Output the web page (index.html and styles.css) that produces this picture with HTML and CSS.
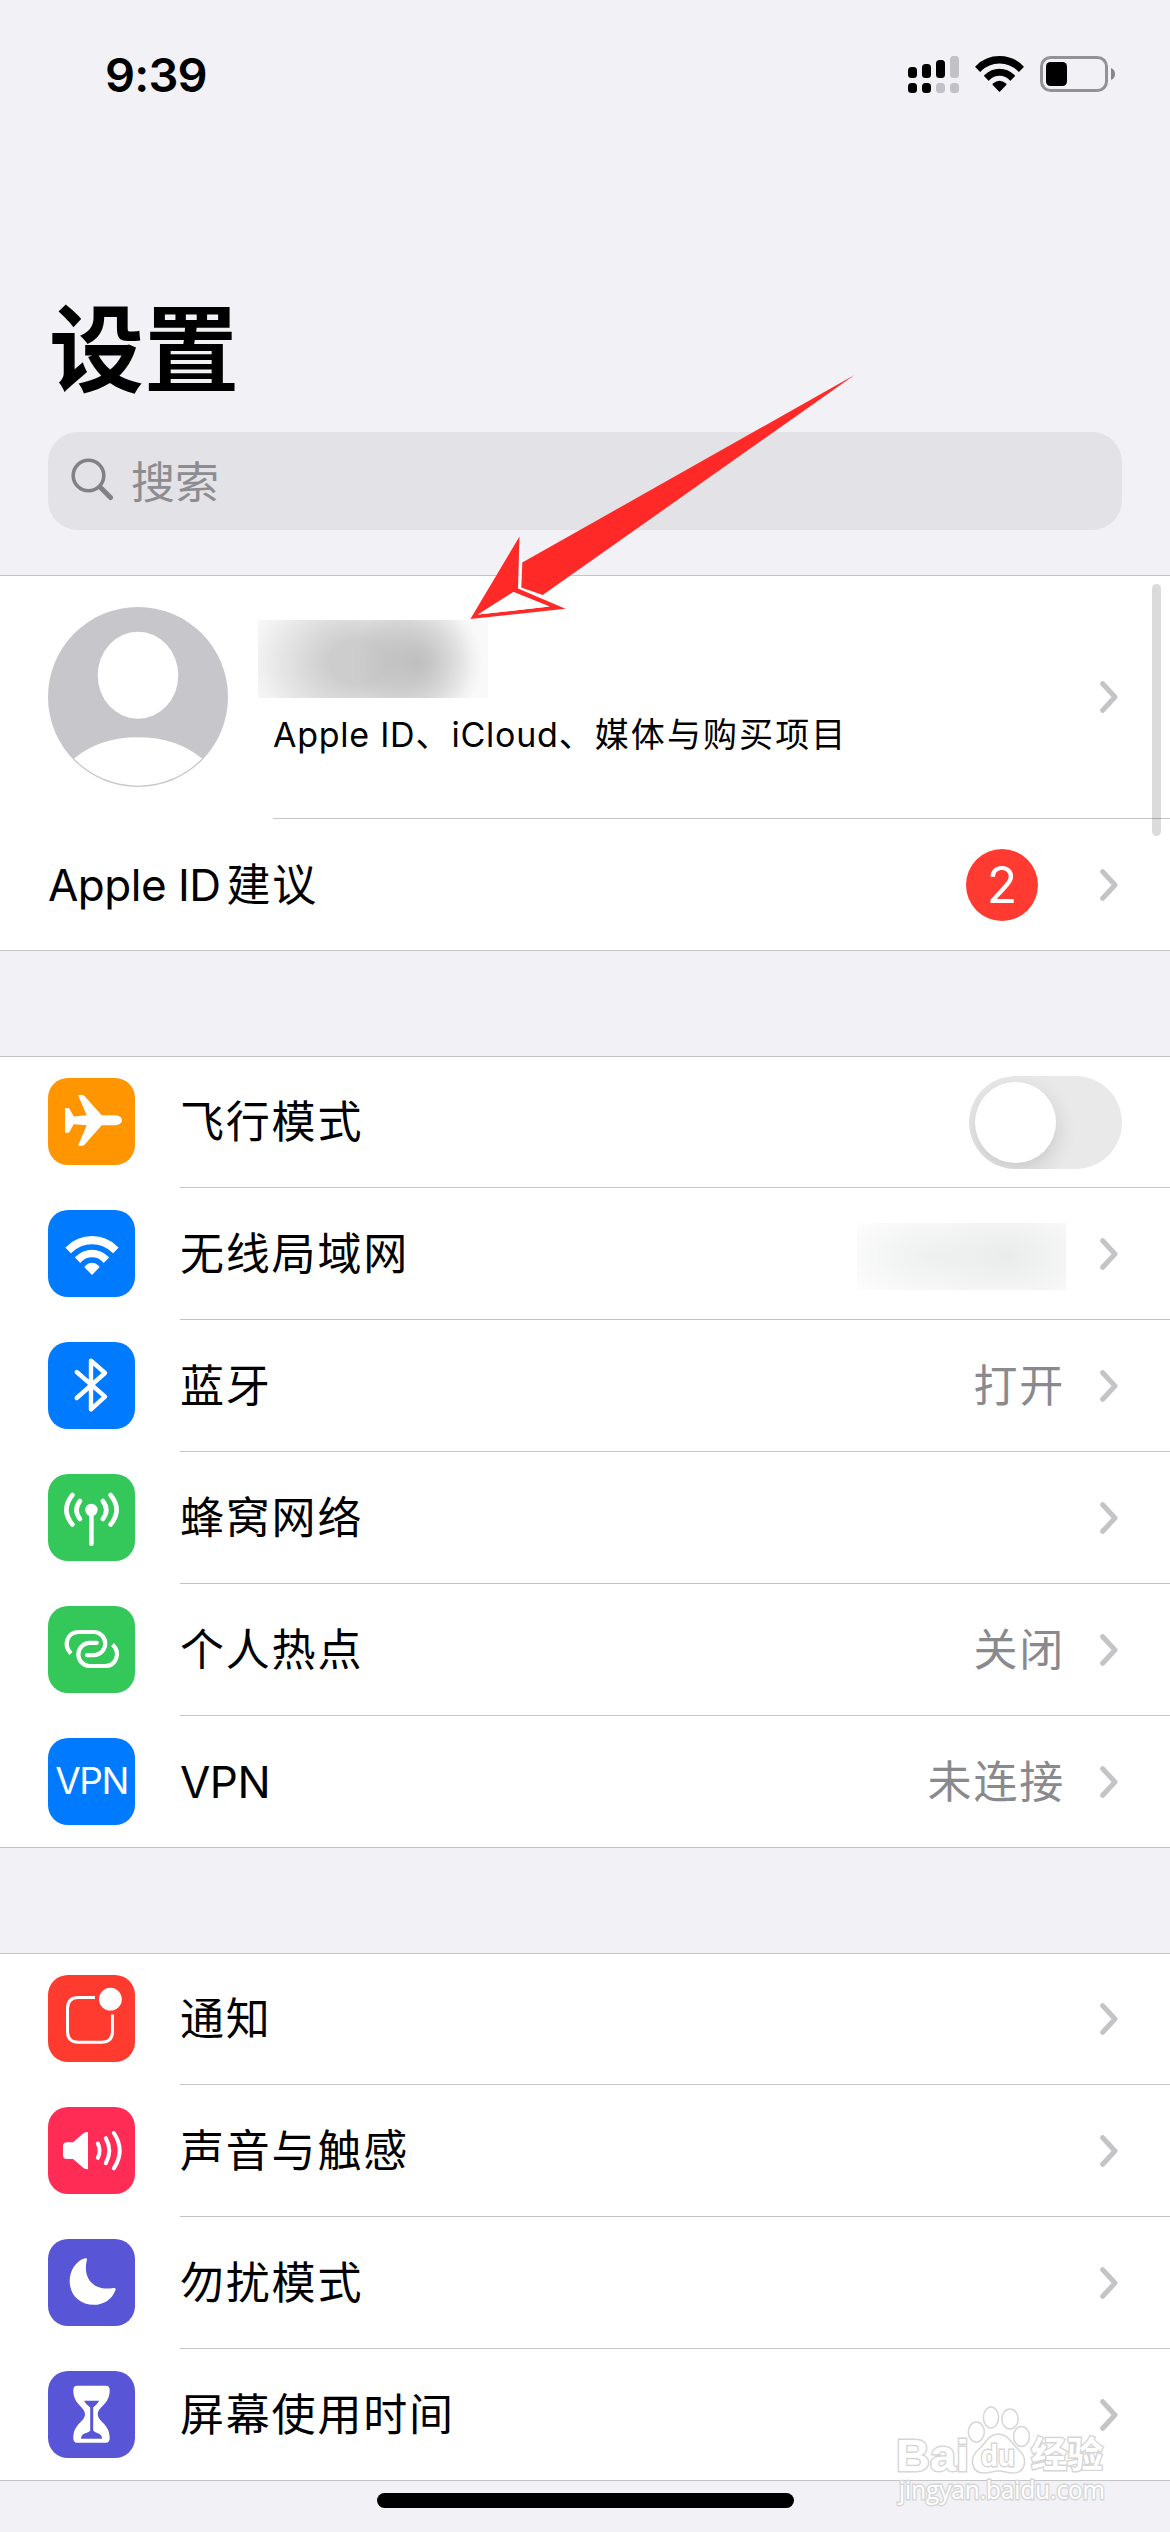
FILE: index.html
```html
<!DOCTYPE html>
<html lang="zh-CN">
<head>
  <meta charset="UTF-8" />
  <meta name="viewport" content="width=device-width, initial-scale=1.0"/>
  <title>设置</title>
  <link rel="stylesheet" href="styles.css">
</head>
<body>
<svg class="defs" width="0" height="0">
  <symbol id="chevron" viewBox="0 0 18 32">
    <path d="M2.7 2.7 L15 16 L2.7 29.3" fill="none" stroke="#c4c4c7" stroke-width="5" stroke-linecap="round" stroke-linejoin="round"/>
  </symbol>
  <clipPath id="wifi-clip"><path d="M24.5 36 L-13 -2.5 H62 Z"/></clipPath>
  <symbol id="wifi" viewBox="0 0 49 36">
    <g clip-path="url(#wifi-clip)" fill="none" stroke="currentColor">
      <circle cx="24.5" cy="33.5" r="29.7" stroke-width="7.4"/>
      <circle cx="24.5" cy="33.5" r="17.3" stroke-width="7"/>
      <circle cx="24.5" cy="33.5" r="8.7" fill="currentColor" stroke="none"/>
    </g>
  </symbol>
</svg>

<div class="phone">
  <header class="status-bar">
    <span class="time">9:39</span>
    <div class="status-icons">
      <svg width="51" height="37" viewBox="0 0 51 37">
        <rect x="0" y="11" width="9" height="11" rx="3.5"/>
        <rect x="14" y="8" width="9" height="14" rx="3.5"/>
        <rect x="28" y="4" width="9" height="18" rx="3.5"/>
        <rect x="42" y="0" width="9" height="22" rx="3.5" fill="#c1c1c6"/>
        <rect x="0" y="27" width="9" height="10" rx="3.5"/>
        <rect x="14" y="27" width="9" height="10" rx="3.5"/>
        <rect x="28" y="27" width="9" height="10" rx="3.5" fill="#c1c1c6"/>
        <rect x="42" y="27" width="9" height="10" rx="3.5" fill="#c1c1c6"/>
      </svg>
      <svg class="status-wifi" width="49" height="36"><use href="#wifi"/></svg>
      <svg width="76" height="36" viewBox="0 0 76 36">
        <rect x="1.5" y="1.5" width="65" height="33" rx="9" fill="none" stroke="#939397" stroke-width="3"/>
        <rect x="6" y="6" width="21" height="24" rx="4.5"/>
        <path d="M71 12 Q75 13.5 75 18 Q75 22.5 71 24 Z" fill="#87878b"/>
      </svg>
    </div>
  </header>

  <h1 class="title">设置</h1>

  <div class="search">
    <svg width="42" height="44" viewBox="0 0 42 44" fill="none" stroke="#828286" stroke-linecap="round">
      <circle cx="17.5" cy="17.5" r="15.3" stroke-width="3.6"/>
      <path d="M29 29 L39.5 39.5" stroke-width="5"/>
    </svg>
    <span>搜索</span>
  </div>

  <section class="group">
    <div class="profile">
      <svg class="avatar" width="180" height="180" viewBox="0 0 180 180">
        <circle cx="90" cy="90" r="90" fill="#c7c6cb"/>
        <ellipse cx="90" cy="68.3" rx="40.3" ry="43.5" fill="#fff"/>
        <path d="M26 151.5 Q52 130.3 90 130.3 Q128 130.3 154 151.5 A89 89 0 0 1 26 151.5 Z" fill="#fff"/>
      </svg>
      <div class="profile-text">
        <div class="hidden-name"></div>
        <div class="profile-sub"><span class="sub-latin">Apple ID</span>、<span class="sub-latin">iCloud</span>、媒体与购买项目</div>
      </div>
      <svg class="chevron" width="18" height="32"><use href="#chevron"/></svg>
    </div>
    <div class="row plain">
      <div class="row-body">
        <span class="label"><span class="latin">Apple ID</span>建议</span>
        <span class="badge">2</span>
        <svg class="chevron" width="18" height="32"><use href="#chevron"/></svg>
      </div>
    </div>
  </section>

  <section class="group">
    <div class="row">
      <div class="icon orange">
        <svg viewBox="0 0 87 87" fill="#fff"><path d="M67 37.3 H53.7 L36.5 18 Q35.5 17 34 17 H30 L38.7 37.3 L25.7 38.5 L21.6 31 Q21 30 20 30 H17 V54.7 H20 Q21 54.7 21.6 53.7 L25.7 46.3 L38.7 47.3 L30 67.7 H34 Q35.5 67.7 36.5 66.7 L53.7 47.3 H67 Q74 46.5 74 42.3 Q74 38 67 37.3 Z"/></svg>
      </div>
      <div class="row-body">
        <span class="label">飞行模式</span>
        <span class="toggle"><span class="knob"></span></span>
      </div>
    </div>
    <div class="row">
      <div class="icon blue">
        <svg class="icon-wifi"><use href="#wifi"/></svg>
      </div>
      <div class="row-body">
        <span class="label">无线局域网</span>
        <span class="hidden-network"></span>
        <svg class="chevron" width="18" height="32"><use href="#chevron"/></svg>
      </div>
    </div>
    <div class="row">
      <div class="icon blue">
        <svg viewBox="0 0 87 87" fill="none" stroke="#fff" stroke-width="4.4" stroke-linecap="round" stroke-linejoin="round"><path d="M28.7 30 L57 54.7 L43 67.3 V18.7 L57 31 L28.7 56"/></svg>
      </div>
      <div class="row-body">
        <span class="label">蓝牙</span>
        <span class="value">打开</span>
        <svg class="chevron" width="18" height="32"><use href="#chevron"/></svg>
      </div>
    </div>
    <div class="row">
      <div class="icon green">
        <svg viewBox="0 0 87 87" fill="none" stroke="#fff" stroke-width="4.6" stroke-linecap="round">
          <circle cx="43.4" cy="36" r="6.2" fill="#fff" stroke="none"/>
          <path d="M43.4 38 V69.8"/>
          <path d="M32 27 Q25 36 32 45 M54.8 27 Q61.8 36 54.8 45"/>
          <path d="M24.4 21 Q12.4 36 24.4 50.5 M62.6 21 Q74.6 36 62.6 50.5"/>
        </svg>
      </div>
      <div class="row-body">
        <span class="label">蜂窝网络</span>
        <svg class="chevron" width="18" height="32"><use href="#chevron"/></svg>
      </div>
    </div>
    <div class="row">
      <div class="icon green">
        <svg viewBox="0 0 87 87" fill="none" stroke="#fff" stroke-width="4.2">
          <path d="M23 47.5 C14.5 39 19.5 26 30.7 26 H46.7 A11.6 11.6 0 0 1 46.7 49.1 H39"/>
          <path d="M23 47.5 C14.5 39 19.5 26 30.7 26 H46.7 A11.6 11.6 0 0 1 46.7 49.1 H39" transform="rotate(180 43.8 43)"/>
          <path d="M39 49.1 H38.9 M48.6 36.9 H48.7" stroke-linecap="round"/>
        </svg>
      </div>
      <div class="row-body">
        <span class="label">个人热点</span>
        <span class="value">关闭</span>
        <svg class="chevron" width="18" height="32"><use href="#chevron"/></svg>
      </div>
    </div>
    <div class="row">
      <div class="icon blue vpn">VPN</div>
      <div class="row-body">
        <span class="label"><span class="latin">VPN</span></span>
        <span class="value">未连接</span>
        <svg class="chevron" width="18" height="32"><use href="#chevron"/></svg>
      </div>
    </div>
  </section>

  <section class="group">
    <div class="row">
      <div class="icon red">
        <svg viewBox="0 0 87 87" fill="none" stroke="#fff" stroke-width="3">
          <path d="M47 22.4 H30.5 Q19.5 22.4 19.5 33.4 V56.2 Q19.5 67.2 30.5 67.2 H53.5 Q64.5 67.2 64.5 56.2 V39.6"/>
          <circle cx="62.4" cy="24.2" r="11.4" fill="#fff" stroke="none"/>
        </svg>
      </div>
      <div class="row-body">
        <span class="label">通知</span>
        <svg class="chevron" width="18" height="32"><use href="#chevron"/></svg>
      </div>
    </div>
    <div class="row">
      <div class="icon pink">
        <svg viewBox="0 0 87 87" fill="none" stroke="#fff" stroke-width="4" stroke-linecap="round">
          <path d="M19 35.3 H25 L35.5 26.3 Q37 25 40 25 V62.2 Q37 62.2 35.5 61 L25 52 H19 Q15 52 15 48.5 V38.8 Q15 35.3 19 35.3 Z" fill="#fff" stroke="none"/>
          <path d="M49.8 36.5 Q53.5 43.5 49.8 50.8 M57.8 31.2 Q64.8 43.5 57.8 56.2 M65.8 26 Q77.6 43.5 65.8 61.4"/>
        </svg>
      </div>
      <div class="row-body">
        <span class="label">声音与触感</span>
        <svg class="chevron" width="18" height="32"><use href="#chevron"/></svg>
      </div>
    </div>
    <div class="row">
      <div class="icon purple">
        <svg viewBox="0 0 87 87" fill="#fff"><path d="M37 19.2 Q39.6 18.8 38.8 21.6 C34.5 38 44.5 52.6 65.5 49 Q68.5 48.6 67.3 51.4 C64 60 56 65.8 45.8 65.8 C31.8 65.8 21.7 56 21.7 42.2 C21.7 31.5 27.8 22 37 19.2 Z"/></svg>
      </div>
      <div class="row-body">
        <span class="label">勿扰模式</span>
        <svg class="chevron" width="18" height="32"><use href="#chevron"/></svg>
      </div>
    </div>
    <div class="row">
      <div class="icon purple">
        <svg viewBox="0 0 87 87">
          <path d="M29 14.7 H58 Q61.7 14.7 61.7 19 C61.7 34 49.8 35.5 49.8 43.2 C49.8 50.8 61.7 52.5 61.7 67 Q61.7 71.7 58 71.7 H29 Q25.3 71.7 25.3 67 C25.3 52.5 37 50.8 37 43.2 C37 35.5 25.3 34 25.3 19 Q25.3 14.7 29 14.7 Z" fill="#fff"/>
          <path d="M36 29.8 H51.3 Q49 33.8 45.2 36.4 V59.5 Q46 61 50.5 62.5 Q54 64 54 67.7 H33 Q33 64 36.5 62.5 Q41.6 61 42.2 59.5 V36.4 Q38 33.8 36 29.8 Z" fill="#5856d6"/>
        </svg>
      </div>
      <div class="row-body">
        <span class="label">屏幕使用时间</span>
        <svg class="chevron" width="18" height="32"><use href="#chevron"/></svg>
      </div>
    </div>
  </section>

  <div class="home-indicator"></div>

  <!-- overlays -->
  <div class="scrollbar"></div>

  <svg class="arrow" width="386" height="246" viewBox="470 375 386 246">
    <path d="M520.3 545 V588 L545 598" fill="none" stroke="#fff" stroke-width="2.4"/>
    <path d="M854.5 375 L522.3 562.5 L521.3 587.4 L542.7 595 Z" fill="#ff2a27"/>
    <path d="M519.5 536.5 L470.4 619 L565.5 608.8 L518 588.4 Z M513.5 592 L549.5 606.6 L478 614.4 Z" fill="#ff2a27" fill-rule="evenodd"/>
    <path d="M513.5 592 L549.5 606.6 L478 614.4 Z" fill="#fff"/>
  </svg>

  <svg class="watermark" width="220" height="120" viewBox="892 2400 220 120">
    <g fill="#fff" stroke="#d6d6d6" stroke-width="1.5">
      <ellipse cx="976.3" cy="2432" rx="8" ry="10"/>
      <ellipse cx="991" cy="2417.5" rx="7.6" ry="10.5"/>
      <ellipse cx="1010" cy="2419" rx="8.2" ry="10"/>
      <ellipse cx="1021.5" cy="2436.5" rx="8" ry="10"/>
      <path d="M998.5 2434 C1008 2434 1011 2443 1019 2450 C1028 2458 1026 2473 1013 2473 C1007 2473 1004 2471 998.5 2471 C993 2471 990 2473 984 2473 C971 2473 969 2458 978 2450 C986 2443 989 2434 998.5 2434 Z"/>
      <g paint-order="stroke" stroke-width="2.8">
        <text x="896" y="2470.5" font-size="45" textLength="73" lengthAdjust="spacingAndGlyphs" class="wm-bold">Bai</text>
        <text x="981" y="2466" font-size="29" textLength="34" lengthAdjust="spacingAndGlyphs" class="wm-bold">du</text>
        <text x="1031" y="2468" font-size="36" textLength="72" lengthAdjust="spacingAndGlyphs" class="wm-bold">经验</text>
        <text x="899" y="2499" font-size="25" textLength="206" lengthAdjust="spacingAndGlyphs" class="wm-url">jingyan.baidu.com</text>
      </g>
    </g>
  </svg>
</div>
</body>
</html>
```
FILE: styles.css
```css
* {
  box-sizing: border-box;
}

body {
  margin: 0;
  font-family: Inter, "Noto Sans CJK SC", sans-serif;
  background-color: #f2f1f6;
  color: #000;
}

.defs {
  position: absolute;
}

.phone {
  position: relative;
  width: 1170px;
  height: 2532px;
  overflow: hidden;
  display: flex;
  flex-direction: column;
}

/* status bar */
.status-bar {
  height: 148px;
  padding: 0 54px 0 105px;
  display: flex;
  justify-content: space-between;
  align-items: center;
}

.time {
  font-size: 47px;
  font-weight: 600;
  letter-spacing: -0.8px;
}

.status-icons {
  display: flex;
  align-items: center;
  gap: 16px;
}

.status-wifi {
  color: #000;
}

/* header */
.title {
  height: 284px;
  margin: 0;
  padding: 138px 48px 0 49px;
  font-size: 95px;
  line-height: 130px;
  font-weight: 700;
}

.search {
  height: 98px;
  margin: 0 48px 45px;
  padding: 0 0 3px 23px;
  display: flex;
  align-items: center;
  gap: 18px;
  border-radius: 30px;
  background-color: #e3e2e7;
  color: #8d8d91;
  font-size: 44px;
}

/* groups */
.group {
  flex-shrink: 0;
  margin-bottom: 105px;
  background-color: #fff;
  box-shadow: inset 0 1px #c5c5c8, inset 0 -1px #c5c5c8;
}

.group:last-of-type {
  margin-bottom: 12px;
}

.row {
  height: 132px;
  padding-left: 48px;
  display: flex;
  gap: 45px;
}

.row-body {
  flex: 1;
  display: flex;
  align-items: center;
  padding-right: 52px;
  border-bottom: 1px solid #c5c5c8;
}

.row:last-child .row-body {
  border-bottom-color: transparent;
}

.label {
  flex: 1;
  font-size: 44px;
  letter-spacing: 1.8px;
  line-height: 60px;
  white-space: nowrap;
}

.latin {
  letter-spacing: -0.5px;
  margin-right: 6px;
}

.value {
  margin-right: 35px;
  font-size: 44px;
  letter-spacing: 1.8px;
  line-height: 60px;
  color: #8a8a8e;
}

.chevron {
  flex-shrink: 0;
}

/* profile */
.profile {
  height: 244px;
  padding: 0 52px 0 48px;
  display: flex;
  align-items: center;
  background: linear-gradient(#c5c5c8, #c5c5c8) 273px 100% / 100% 1px no-repeat;
}

.profile-text {
  flex: 1;
  height: 100%;
  padding: 45px 0 0 30px;
}

.hidden-name {
  width: 230px;
  height: 78px;
  background:
    radial-gradient(ellipse 64px 66px at 160px 42px, rgba(180, 180, 180, 0.75), rgba(195, 195, 195, 0)),
    radial-gradient(ellipse 115px 85px at 100px 42px, rgba(200, 200, 200, 0.9) 25%, rgba(225, 225, 225, 0) 100%),
    #f9f9f9;
}

.profile-sub {
  padding: 12px 0 0 15px;
  font-size: 34px;
  line-height: 50px;
  letter-spacing: 2.1px;
  white-space: nowrap;
}

.sub-latin {
  letter-spacing: 0.75px;
}

.badge {
  width: 72px;
  height: 72px;
  margin-right: 62px;
  border-radius: 50%;
  background-color: #ff3b31;
  color: #fff;
  font-size: 50px;
  line-height: 72px;
  text-align: center;
}

/* row icons */
.icon {
  width: 87px;
  height: 87px;
  margin-top: 22px;
  flex-shrink: 0;
  border-radius: 20px;
  color: #fff;
}

.icon svg {
  display: block;
  width: 87px;
  height: 87px;
}

.icon .icon-wifi {
  width: 54px;
  height: 39px;
  margin: 26px 0 0 16.5px;
}

.icon:has(.icon-wifi) {
  display: flow-root;
}

.vpn {
  font-size: 37px;
  line-height: 86px;
  text-align: center;
  letter-spacing: -1.5px;
}

.orange { background-color: #ff9500; }
.blue { background-color: #007aff; }
.green { background-color: #34c759; }
.red { background-color: #ff3b30; }
.pink { background-color: #ff2d55; }
.purple { background-color: #5856d6; }

.toggle {
  width: 153px;
  height: 93px;
  margin: 2px -4px 0 0;
  padding: 6px;
  overflow: hidden;
  border-radius: 47px;
  background-color: #e9e9ea;
}

.knob {
  display: block;
  width: 81px;
  height: 81px;
  border-radius: 50%;
  background-color: #fff;
  box-shadow: 0 8px 22px rgba(0, 0, 0, 0.14);
}

.hidden-network {
  width: 209px;
  height: 67px;
  margin: 5px 34px 0 0;
  background:
    radial-gradient(ellipse 75px 48px at 150px 33px, #eaebeb, rgba(240, 240, 240, 0)),
    radial-gradient(ellipse 105px 50px at 80px 33px, #eeefef, rgba(248, 248, 248, 0)),
    linear-gradient(90deg, #fdfdfd, #f7f7f7);
}

.home-indicator {
  width: 417px;
  height: 15px;
  flex-shrink: 0;
  margin: 0 auto;
  border-radius: 8px;
  background-color: #000;
}

.scrollbar {
  position: absolute;
  top: 584px;
  right: 9px;
  width: 9px;
  height: 252px;
  border-radius: 5px;
  background-color: rgba(0, 0, 0, 0.14);
}

.arrow {
  position: absolute;
  left: 470px;
  top: 375px;
}

.watermark {
  position: absolute;
  left: 892px;
  top: 2400px;
}

.wm-bold {
  font-family: "Liberation Sans", "Noto Sans CJK SC", sans-serif;
  font-weight: 700;
}

.wm-url {
  font-family: "Open Sans", sans-serif;
}
```
